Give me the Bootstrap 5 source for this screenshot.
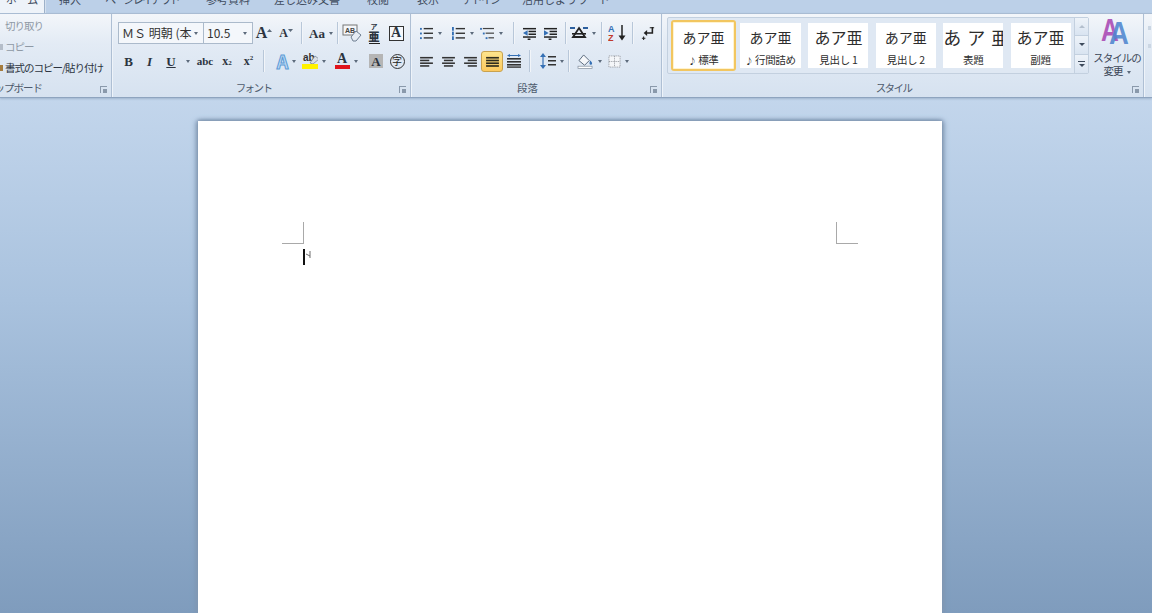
<!DOCTYPE html>
<html lang="ja">
<head>
<meta charset="UTF-8">
<title>Word</title>
<link href="https://cdn.jsdelivr.net/npm/bootstrap@5.3.0/dist/css/bootstrap.min.css" rel="stylesheet">
<style>
html,body{height:613px;overflow:hidden}
body{font-family:"Noto Sans CJK JP","Liberation Sans",sans-serif;font-size:11px;color:#3b4657;background:linear-gradient(#c3d6ec 97px,#a9c2de 300px,#7f9cbd 613px)}
.tab-strip{height:13px;background:#bcd0e8;overflow:hidden}
.tab-item{height:13px;font-size:11px;line-height:14px;text-align:center;color:#3f4c5e;white-space:nowrap;overflow:hidden;flex:none}
.tab-item span{display:block;margin-top:-8px}
.tab-on{background:#eef3f9;border-right:1px solid #9db1c9;box-shadow:1px 0 0 #d5e1ef}
.kana-tight{letter-spacing:-1.8px}
.t-home{width:45px}.t-ins{width:50px}.t-page{width:94px}.t-ref{width:78px}.t-mail{width:80px}.t-rev{width:62px}.t-view{width:38px}.t-add{width:68px}.t-use{width:102px}
.ribbon{height:85px;background:linear-gradient(#f3f6fa,#e3ebf5 35%,#d6e2f0);border-top:1px solid #a9bcd3;border-bottom:1px solid #8ea4bf;box-shadow:0 1px 2px #9fb4cd}
.rb-group{height:83px;border-right:1px solid #aebfd4;box-shadow:1px 0 0 #eef3f9;position:relative;flex:none}
.g-clip{width:112px}.g-font{width:299px}.g-para{width:251px}.g-style{width:482px}
.rb-body{height:67px;padding-top:8px;gap:6px}
.g-font .rb-body{padding-left:6px}
.g-para .rb-body{padding-left:4px}
.g-clip .rb-body{padding:5px 0 0 5px;gap:7px;white-space:nowrap}
.g-style .rb-body{padding:3px 0 0 5px;gap:1px}
.rb-label{height:14px;text-align:center;font-size:10.5px;line-height:14px;color:#4d5a6c;white-space:nowrap}
.g-font .rb-label{padding-right:15px;letter-spacing:-1.6px}
.g-para .rb-label{padding-right:17px}
.g-style .rb-label{padding-right:18px;letter-spacing:-1.6px}
.g-clip .rb-label{text-align:left;margin-left:-15px;letter-spacing:-1px}
.launcher{position:absolute;right:4px;top:72px;width:7px;height:7px;border:1px solid #8a99ab;border-width:1px 0 0 1px}
.launcher::after{content:"";position:absolute;right:0;bottom:0;width:4px;height:4px;background:#8a99ab}
.rb-row{display:flex;align-items:center;height:22px}
.sl{display:flex;align-items:center;justify-content:center;height:22px;flex:none}
.s5{width:5px}.s8{width:8px}.s9{width:9px}.s12{width:12px}.s20{width:20px}.s21{width:21px}.s22{width:22px}.s24{width:24px}.s28{width:28px}.s31{width:31px}.s33{width:33px}
.rb-sep{width:1px;height:22px;background:#b8c7d9;box-shadow:1px 0 0 #f2f5f9;flex:none}
.drop{width:0;height:0;border:solid transparent;border-width:3px 2.5px 0;border-top-color:#5c6a7b;margin-left:4px;flex:none}
.tx-serif{font-family:"Liberation Serif",serif;font-weight:700;color:#2c3440;line-height:1}
.fs-b{font-size:13px}.fs-grow{font-size:16px}.fs-shrink{font-size:12px}.fs-abc{font-size:11px}.fs-x{font-size:12px}
.fs-x sub,.fs-x sup{font-size:7px}
.combo{height:22px;border:1px solid #abbacb;background:#f4f7fb;display:flex;align-items:center;font-size:12px;color:#333;white-space:nowrap;overflow:hidden;padding-left:3px;flex:none}
.combo .drop{margin-left:auto;margin-right:5px}
.cb-name{width:86px}.cb-size{width:50px;margin-left:-1px}
.clip-line{font-size:10.5px;line-height:14px;letter-spacing:-1px;position:relative}
.clip-off{color:#8f99a5}
.clip-on{color:#2c3440}
.clip-ic{position:absolute;left:-5px;top:4px;width:3px;height:6px;background:#a67c3d}
.clip-ic-off{background:#b4bdc9}
.sel-btn{background:linear-gradient(#fde48c,#fcc95f);border:1px solid #c9a24e;border-radius:3px;height:21px}
.gallery{width:422px;height:57px;border:1px solid #c3d0df;border-radius:2px;background:#dfe8f3;flex:none}
.gal-cards{flex:1;gap:7.4px;padding-left:3px}
.style-card{height:45px;width:60px;background:#fff;text-align:center;color:#2d2d2d;overflow:hidden;flex:none}
.card-w{width:61px}
.style-on{width:65px;height:51px;border:2px solid #f2c660;border-radius:3px;box-shadow:inset 0 0 0 1px #fff3cf;margin-right:-3.400px}
.st-sample{font-size:14px;line-height:20px;margin-top:4px;white-space:nowrap}
.style-on .st-sample{margin-top:5px}
.st-name{font-size:10.500px;line-height:14px;margin-top:6px;white-space:nowrap;letter-spacing:-.3px}
.st-big{font-size:18px;letter-spacing:1px}
.st-mid{font-size:16px}
.st-note{font-size:8px;margin-right:2px}
.gal-col{width:14px;flex:none;border-left:1px solid #c3d0df}
.gal-btn{height:18.300px;border-bottom:1px solid #c3d0df;background:linear-gradient(#eef3f9,#d9e4f1);display:flex;flex-direction:column;align-items:center;justify-content:center;gap:2px}
.gal-btn:last-child{border-bottom:0}
.gal-up{width:0;height:0;border:solid transparent;border-width:0 3px 3px;border-bottom-color:#b3bfcd}
.gal-dn{width:0;height:0;border:solid transparent;border-width:3px 3px 0;border-top-color:#3e4b5c}
.gal-ln{width:7px;height:1px;background:#3e4b5c}
.change-btn{width:54px;flex:none;text-align:center;font-size:10.5px;line-height:13px;letter-spacing:-1px;color:#3b4657;white-space:nowrap}
.change-btn svg{margin-bottom:5px}
.next-group{padding:12px 0 0 4px;gap:14px}
.next-group span{width:3px;height:4px;background:#cbd6e3}
.page-sheet{width:744px;height:492px;margin:23px 0 0 198px;background:#fff;padding:101px 84px 0;box-shadow:-2px 0 5px #7f95b0,2px 0 5px #7f95b0,0 -1px 3px #8da3bd}
.crop-mark{width:22px;height:22px;border:solid #a9a9a9;border-width:0}
.crop-l{border-right-width:1px;border-bottom-width:1px}
.crop-r{border-left-width:1px;border-bottom-width:1px}
.para-mark{position:relative;padding-top:5px}
.caret-line{width:2px;height:16px;background:#111;margin-left:21px}
.para-mark svg{position:absolute;left:22px;top:6px}
.boxed{border:1px solid #333;width:15px;height:15px;display:flex;align-items:center;justify-content:center;font-size:14px;background:#f6f8fb}
.ruby-ic{display:flex;flex-direction:column;align-items:center;color:#2c3440;font-weight:700}
.ruby-ic small{font-size:7px;line-height:8px}
.ruby-ic b{font-size:11px;line-height:13px;border-bottom:1px solid #222}
.circle-ji{width:15px;height:15px;border:1px solid #333;border-radius:50%;display:flex;align-items:center;justify-content:center;font-size:10px;color:#222;line-height:1}
.gray-a{width:14px;height:14px;background:#b5b5b5;display:flex;align-items:center;justify-content:center;font-size:13px}
.color-a{display:flex;flex-direction:column;align-items:center;font-size:14px;line-height:11px}
.color-a i{display:block;width:15px;height:4px;margin-top:1px;background:#e0141c}
.glow-a{font-size:18px;font-weight:700;color:#bcd9f3;-webkit-text-stroke:1px #5d9bd6;line-height:1}
.svg-sans{font-family:"Liberation Sans",sans-serif;font-weight:700}
</style>
</head>
<body>

<svg width="0" height="0" class="position-absolute">
  <symbol id="ic-bullets" viewBox="0 0 16 14"><g fill="#3570b5"><rect x="1" y="1" width="2" height="2"/><rect x="1" y="6" width="2" height="2"/><rect x="1" y="11" width="2" height="2"/></g><g fill="#333"><rect x="5" y="1" width="10" height="1.5"/><rect x="5" y="6" width="10" height="1.5"/><rect x="5" y="11" width="10" height="1.5"/></g></symbol>
  <symbol id="ic-numbers" viewBox="0 0 16 14"><g fill="#3570b5"><rect x="1" y="0" width="2" height="4"/><rect x="1" y="5" width="2" height="4"/><rect x="1" y="10" width="2" height="4"/></g><g fill="#333"><rect x="5" y="1" width="10" height="1.5"/><rect x="5" y="6" width="10" height="1.5"/><rect x="5" y="11" width="10" height="1.5"/></g></symbol>
  <symbol id="ic-multi" viewBox="0 0 16 14"><g fill="#3570b5"><rect x="0" y="1" width="2" height="2"/><rect x="3" y="6" width="2" height="2"/><rect x="6" y="11" width="2" height="2"/></g><g fill="#444"><rect x="3" y="1" width="12" height="1.3"/><rect x="6" y="6" width="9" height="1.3"/><rect x="9" y="11" width="6" height="1.3"/></g></symbol>
  <symbol id="ic-out" viewBox="0 0 16 14"><g fill="#222"><rect x="1" y="1" width="14" height="1.6"/><rect x="7" y="4" width="8" height="1.6"/><rect x="7" y="7" width="8" height="1.6"/><rect x="1" y="10" width="14" height="1.6"/><rect x="6" y="12.400" width="3" height="1.600"/></g><path d="M1 6.500 6 3.500v6z" fill="#3570b5"/></symbol>
  <symbol id="ic-in" viewBox="0 0 16 14"><g fill="#222"><rect x="1" y="1" width="14" height="1.6"/><rect x="7" y="4" width="8" height="1.6"/><rect x="7" y="7" width="8" height="1.6"/><rect x="1" y="10" width="14" height="1.6"/><rect x="6" y="12.400" width="3" height="1.600"/></g><path d="M6 6.500 1 3.500v6z" fill="#3570b5"/></symbol>
  <symbol id="ic-left" viewBox="0 0 16 12"><g fill="#333"><rect x="1" y="1" width="14" height="1.7"/><rect x="1" y="4" width="10" height="1.7"/><rect x="1" y="7" width="14" height="1.7"/><rect x="1" y="10" width="10" height="1.7"/></g></symbol>
  <symbol id="ic-center" viewBox="0 0 16 12"><g fill="#333"><rect x="1" y="1" width="14" height="1.7"/><rect x="3" y="4" width="10" height="1.7"/><rect x="1" y="7" width="14" height="1.7"/><rect x="3" y="10" width="10" height="1.7"/></g></symbol>
  <symbol id="ic-right" viewBox="0 0 16 12"><g fill="#333"><rect x="1" y="1" width="14" height="1.7"/><rect x="5" y="4" width="10" height="1.7"/><rect x="1" y="7" width="14" height="1.7"/><rect x="5" y="10" width="10" height="1.7"/></g></symbol>
  <symbol id="ic-just" viewBox="0 0 16 12"><g fill="#2e2c1e"><rect x="1" y="1" width="14" height="1.8"/><rect x="1" y="4" width="14" height="1.8"/><rect x="1" y="7" width="14" height="1.8"/><rect x="1" y="10" width="14" height="1.8"/></g></symbol>
  <symbol id="ic-dist" viewBox="0 0 16 14"><g fill="#333"><rect x="1" y="4" width="14" height="1.6"/><rect x="1" y="7" width="14" height="1.6"/><rect x="1" y="10" width="14" height="1.6"/><rect x="1" y="12.400" width="14" height="1.4"/></g><path d="M1 1.500 4 0v3zM15 1.500 12 0v3zM4 1h8v1H4z" fill="#3570b5"/></symbol>
  <symbol id="ic-spacing" viewBox="0 0 16 16"><path d="M3 0 6 4H0zM3 16 0 12h6z" fill="#3570b5"/><rect x="2.400" y="4" width="1.200" height="8" fill="#3570b5"/><g fill="#333"><rect x="8" y="3" width="8" height="1.500"/><rect x="8" y="7" width="8" height="1.500"/><rect x="8" y="11" width="8" height="1.500"/></g></symbol>
  <symbol id="ic-tate" viewBox="0 0 18 14"><path d="M9 2 15 11H3z" fill="none" stroke="#222" stroke-width="1.800"/><rect x="2" y="7" width="14" height="1.600" fill="#222"/><path d="M0 2h5M13 2h5" stroke="#2c5f9e" stroke-width="1.800"/></symbol>
  <symbol id="ic-sort" viewBox="0 0 18 18"><path d="M14 1v14" stroke="#222" stroke-width="1.500"/><path d="M10.500 11.500 14 16.500l3.500-5z" fill="#222"/></symbol>
  <symbol id="ic-para" viewBox="0 0 16 16"><path d="M13 1v7H6" fill="none" stroke="#222" stroke-width="1.800"/><path d="M7 4.500 3 8l4 3.500z" fill="#222"/><path d="M3 12v4M1 14h4M10 2h5" stroke="#222" stroke-width="1.200"/></symbol>
  <symbol id="ic-fill" viewBox="0 0 18 16"><path d="M7 1 13 7 8 12 2 7z" fill="#f5f7fa" stroke="#56667a"/><path d="M14 7c2.500 2 2.500 4 1 4.500s-2.500-1.500-1-4.500" fill="#3570b5"/><rect x="1" y="13" width="15" height="2.500" fill="#fff" stroke="#7a8797" stroke-width=".7"/></symbol>
  <symbol id="ic-border" viewBox="0 0 14 14"><rect x="1" y="1" width="12" height="12" fill="#f4f6f9" stroke="#8a8f96" stroke-dasharray="1 1"/><path d="M7 1v12M1 7h12" stroke="#8a8f96" stroke-dasharray="1 1"/></symbol>
</svg>

<div class="tab-strip d-flex">
  <div class="tab-item tab-on t-home"><span>ホーム</span></div>
  <div class="tab-item t-ins"><span>挿入</span></div>
  <div class="tab-item t-page"><span class="kana-tight">ページレイアウト</span></div>
  <div class="tab-item t-ref"><span>参考資料</span></div>
  <div class="tab-item t-mail"><span>差し込み文書</span></div>
  <div class="tab-item t-rev"><span>校閲</span></div>
  <div class="tab-item t-view"><span>表示</span></div>
  <div class="tab-item t-add"><span class="kana-tight">アドイン</span></div>
  <div class="tab-item t-use"><span>活用しようワード</span></div>
</div>

<div class="ribbon d-flex">
  <!-- クリップボード -->
  <div class="rb-group g-clip">
    <div class="rb-body d-flex flex-column">
      <div class="clip-line clip-off">切り取り</div>
      <div class="clip-line clip-off"><i class="clip-ic clip-ic-off"></i>コピー</div>
      <div class="clip-line clip-on"><i class="clip-ic"></i>書式のコピー/貼り付け</div>
    </div>
    <div class="rb-label">リップボード</div>
    <div class="launcher"></div>
  </div>

  <!-- フォント -->
  <div class="rb-group g-font">
    <div class="rb-body d-flex flex-column">
      <div class="rb-row">
        <div class="combo cb-name">ＭＳ 明朝 (本<span class="drop"></span></div>
        <div class="combo cb-size">10.5<span class="drop"></span></div>
        <div class="sl s22 tx-serif fs-grow">A<svg width="5" height="8"><path d="M0 3 2.500 0 5 3z" fill="#5c6a7b"/></svg></div>
        <div class="sl s22 tx-serif fs-shrink">A<svg width="5" height="8"><path d="M0 0h5L2.500 3z" fill="#5c6a7b"/></svg></div>
        <div class="sl s8"><div class="rb-sep"></div></div>
        <div class="sl s28 tx-serif fs-b ps-1">Aa<span class="drop"></span></div>
        <div class="sl s8"><div class="rb-sep"></div></div>
        <div class="sl s22">
          <svg width="20" height="18"><rect x="1" y="1" width="14" height="10" fill="#f4f6f9" stroke="#777"/><text x="3" y="9" font-size="7" class="svg-sans" fill="#444">AB</text><path d="M9 13 14 7l5 4-5 6h-3z" fill="#e6ecf4" stroke="#6f7f92"/></svg>
        </div>
        <div class="sl s22"><div class="ruby-ic"><small>ア</small><b>亜</b></div></div>
        <div class="sl s22"><div class="boxed tx-serif">A</div></div>
      </div>
      <div class="rb-row">
        <div class="sl s21 tx-serif fs-b">B</div>
        <div class="sl s21 tx-serif fs-b fst-italic">I</div>
        <div class="sl s22 tx-serif fs-b text-decoration-underline">U</div>
        <div class="sl s12"><span class="drop m-0"></span></div>
        <div class="sl s22 tx-serif fs-abc">abc</div>
        <div class="sl s22 tx-serif fs-x">x<sub>2</sub></div>
        <div class="sl s21 tx-serif fs-x">x<sup>2</sup></div>
        <div class="sl s8"><div class="rb-sep"></div></div>
        <div class="sl s31 ms-1"><span class="glow-a">A</span><span class="drop"></span></div>
        <div class="sl s24">
          <svg width="18" height="18"><text x="1" y="9" font-size="10" class="svg-sans" fill="#333">ab</text><path d="M13 4 17 7 11 12l-3-1z" fill="#d8dfe8" stroke="#7b8796" stroke-width=".8"/><rect x="0" y="12" width="16" height="5" fill="#fff200"/></svg><span class="drop"></span>
        </div>
        <div class="sl s24 ms-2"><div class="color-a tx-serif"><span>A</span><i></i></div><span class="drop"></span></div>
        <div class="sl s20 ms-2"><div class="gray-a tx-serif">A</div></div>
        <div class="sl s22"><div class="circle-ji">字</div></div>
      </div>
    </div>
    <div class="rb-label">フォント</div>
    <div class="launcher"></div>
  </div>

  <!-- 段落 -->
  <div class="rb-group g-para">
    <div class="rb-body d-flex flex-column">
      <div class="rb-row">
        <div class="sl s31"><svg width="15" height="13"><use href="#ic-bullets"/></svg><span class="drop"></span></div>
        <div class="sl s33"><svg width="15" height="13"><use href="#ic-numbers"/></svg><span class="drop"></span></div>
        <div class="sl s24"><svg width="15" height="13"><use href="#ic-multi"/></svg><span class="drop"></span></div>
        <div class="sl s12 ms-1"><div class="rb-sep"></div></div>
        <div class="sl s21"><svg width="15" height="13"><use href="#ic-out"/></svg></div>
        <div class="sl s21"><svg width="15" height="13"><use href="#ic-in"/></svg></div>
        <div class="sl s8"><div class="rb-sep"></div></div>
        <div class="sl s28"><svg width="18" height="14"><use href="#ic-tate"/></svg><span class="drop"></span></div>
        <div class="sl s9"><div class="rb-sep"></div></div>
        <div class="sl s22">
          <svg width="18" height="18"><use href="#ic-sort"/><text x="0" y="8" font-size="9" class="svg-sans" fill="#3570b5">A</text><text x="0" y="17" font-size="9" class="svg-sans" fill="#c0392b">Z</text></svg>
        </div>
        <div class="sl s9"><div class="rb-sep"></div></div>
        <div class="sl s22"><svg width="14" height="14"><use href="#ic-para"/></svg></div>
      </div>
      <div class="rb-row">
        <div class="sl s22"><svg width="15" height="11"><use href="#ic-left"/></svg></div>
        <div class="sl s22"><svg width="15" height="11"><use href="#ic-center"/></svg></div>
        <div class="sl s22"><svg width="15" height="11"><use href="#ic-right"/></svg></div>
        <div class="sl s22 sel-btn"><svg width="15" height="11"><use href="#ic-just"/></svg></div>
        <div class="sl s22"><svg width="16" height="14"><use href="#ic-dist"/></svg></div>
        <div class="sl s9"><div class="rb-sep"></div></div>
        <div class="sl s28 ms-1"><svg width="16" height="16"><use href="#ic-spacing"/></svg><span class="drop"></span></div>
        <div class="sl s5"><div class="rb-sep"></div></div>
        <div class="sl s28 ms-1"><svg width="17" height="15"><use href="#ic-fill"/></svg><span class="drop"></span></div>
        <div class="sl s31"><svg width="13" height="13"><use href="#ic-border"/></svg><span class="drop"></span></div>
      </div>
    </div>
    <div class="rb-label">段落</div>
    <div class="launcher"></div>
  </div>

  <!-- スタイル -->
  <div class="rb-group g-style">
    <div class="rb-body d-flex">
      <div class="gallery d-flex">
        <div class="gal-cards d-flex align-items-center">
          <div class="style-card style-on"><div class="st-sample">あア亜</div><div class="st-name"><span class="st-note">♪</span>標準</div></div>
          <div class="style-card card-w"><div class="st-sample">あア亜</div><div class="st-name"><span class="st-note">♪</span>行間詰め</div></div>
          <div class="style-card"><div class="st-sample st-mid">あア亜</div><div class="st-name">見出し 1</div></div>
          <div class="style-card"><div class="st-sample">あア亜</div><div class="st-name">見出し 2</div></div>
          <div class="style-card"><div class="st-sample st-big">あ ア 亜</div><div class="st-name">表題</div></div>
          <div class="style-card"><div class="st-sample st-mid">あア亜</div><div class="st-name">副題</div></div>
        </div>
        <div class="gal-col">
          <div class="gal-btn"><span class="gal-up"></span></div>
          <div class="gal-btn"><span class="gal-dn"></span></div>
          <div class="gal-btn"><span class="gal-ln"></span><span class="gal-dn"></span></div>
        </div>
      </div>
      <div class="change-btn">
        <svg width="34" height="29" class="d-block mx-auto">
          <text x="1" y="24" font-size="31" textLength="17" lengthAdjust="spacingAndGlyphs" class="svg-sans" fill="#b05cbb">A</text>
          <text x="9" y="27" font-size="31" textLength="19" lengthAdjust="spacingAndGlyphs" class="svg-sans" fill="#4f86cf" fill-opacity=".9">A</text>
        </svg>
        スタイルの<br>変更<span class="drop d-inline-block align-middle"></span>
      </div>
    </div>
    <div class="rb-label">スタイル</div>
    <div class="launcher"></div>
  </div>
  <div class="next-group d-flex flex-column flex-grow-1"><span></span><span></span></div>
</div>

<div class="page-sheet">
  <div class="d-flex justify-content-between">
    <div class="crop-mark crop-l"></div>
    <div class="crop-mark crop-r"></div>
  </div>
  <div class="para-mark">
    <div class="caret-line"></div>
    <svg width="10" height="10"><path d="M6 1v7M6 6 2 4" fill="none" stroke="#6e6e6e"/></svg>
  </div>
</div>

</body>
</html>
